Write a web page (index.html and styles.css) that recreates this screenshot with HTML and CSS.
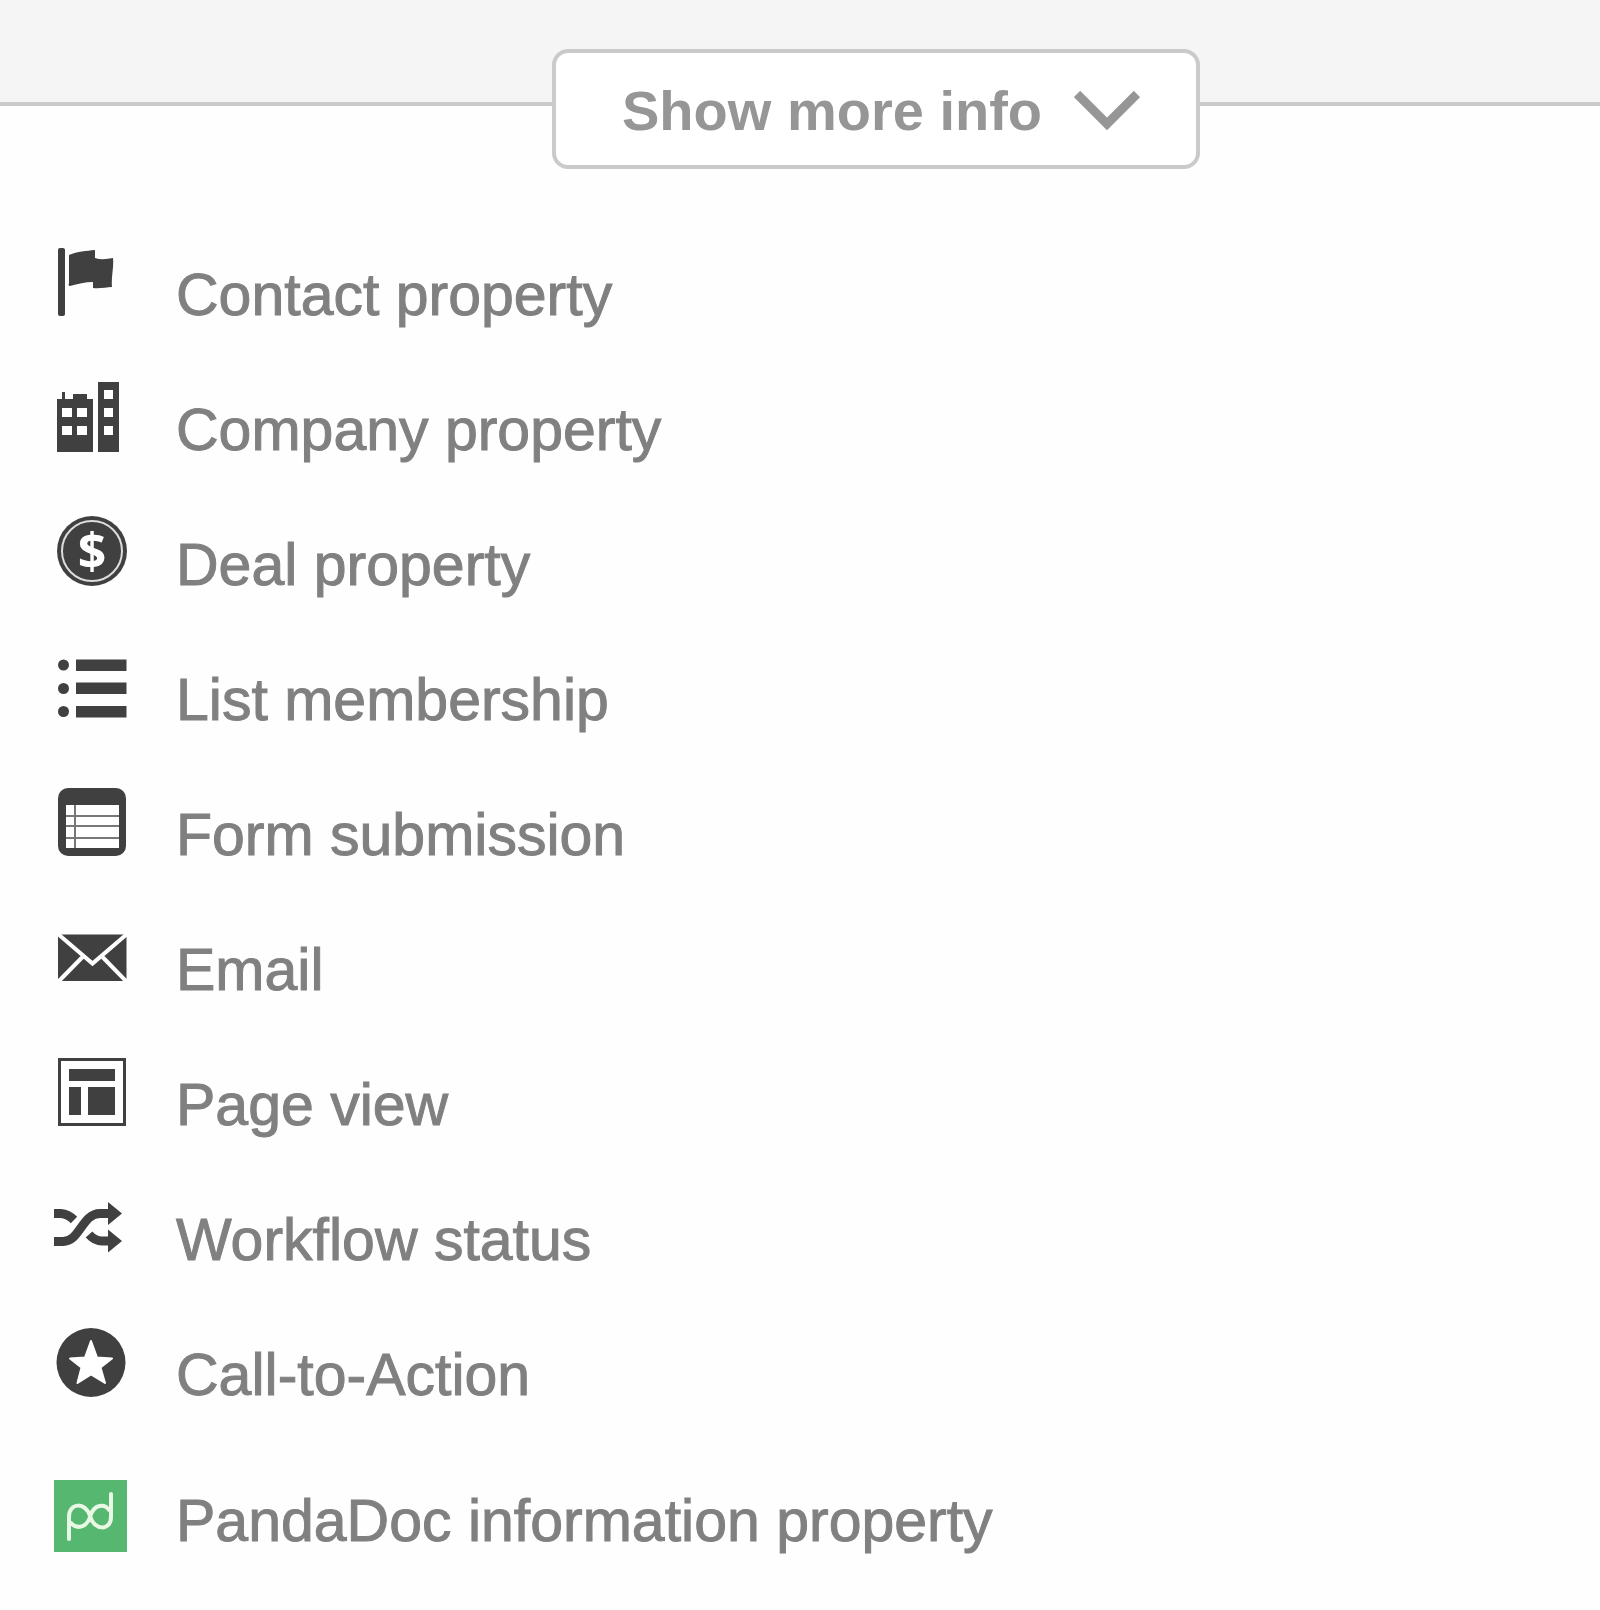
FILE: index.html
```html
<!DOCTYPE html>
<html lang="en">
<head>
  <meta charset="UTF-8">
  <title>Properties</title>
  <link rel="stylesheet" href="styles.css">
</head>
<body>
<header class="info-bar">
  <button class="show-more" type="button">
    Show more info
    <svg class="chevron" viewBox="0 0 66 40" aria-hidden="true">
      <path d="M3 3L33 33L63 3"/>
    </svg>
  </button>
</header>
<main>
  <ul class="properties">
    <li>
      <svg class="icon" viewBox="0 0 74 84" aria-hidden="true">
        <rect x="4" y="3" width="7" height="68" rx="2"/>
        <path d="M15 10C24 6 32 6 41 5V13C47 15 53 14 59 13C60 23 57 32 58 42C52 42 46 44 39 43V37C31 37 24 39 16 41Q14 41 15 38Z"/>
      </svg>
      <span>Contact property</span>
    </li>
    <li>
      <svg class="icon" viewBox="0 0 74 84" aria-hidden="true">
        <path d="M3 72V19H8V12H11V19H19V14H33V19H39V72ZM44 2H65V72H44Z"/>
        <path class="light" d="M8 28h10v9H8zM23 28h10v9H23zM8 46h10v9H8zM23 46h10v9H23zM50 10h9v9h-9zM50 28h9v9h-9zM50 46h9v9h-9z"/>
      </svg>
      <span>Company property</span>
    </li>
    <li>
      <svg class="icon" viewBox="0 0 74 84" aria-hidden="true">
        <circle cx="38" cy="36" r="35"/>
        <circle class="ring" cx="38" cy="36" r="30"/>
        <text class="dollar" x="38" y="54">$</text>
      </svg>
      <span>Deal property</span>
    </li>
    <li>
      <svg class="icon" viewBox="0 0 74 84" aria-hidden="true">
        <circle cx="9.5" cy="15" r="5.5"/>
        <circle cx="9.5" cy="38.5" r="5.5"/>
        <circle cx="9.5" cy="61.5" r="5.5"/>
        <path d="M22 9.5h50.5v11.5H22zM22 32.5h50.5v11.5H22zM22 56h50.5v11.5H22z"/>
      </svg>
      <span>List membership</span>
    </li>
    <li>
      <svg class="icon" viewBox="0 0 74 84" aria-hidden="true">
        <rect x="4" y="3" width="68" height="68" rx="10"/>
        <path class="light" d="M12 20H65V63H12Z"/>
        <path class="rules" d="M12 31H65M12 41H65M12 53H65M21 20V63"/>
      </svg>
      <span>Form submission</span>
    </li>
    <li>
      <svg class="icon" viewBox="0 0 74 84" aria-hidden="true">
        <rect x="4" y="14.5" width="68.5" height="46.5"/>
        <path class="fold" d="M4 14L38.5 43.5L73 14M4 62L29 36.5M73 62L48 36.5"/>
      </svg>
      <span>Email</span>
    </li>
    <li>
      <svg class="icon" viewBox="0 0 74 84" aria-hidden="true">
        <rect class="frame" x="5.5" y="4.5" width="65" height="65"/>
        <path d="M15 14H61V26H15ZM15 32H27V60H15ZM34 32H61V60H34Z"/>
      </svg>
      <span>Page view</span>
    </li>
    <li>
      <svg class="icon" viewBox="0 0 74 84" aria-hidden="true">
        <path class="strand" d="M0 23.5H7Q14 24 20 30M0 51.5H9C26 51.5 28 23.5 46 23.5H56M35 44.5Q41 51 48 51H56"/>
        <path d="M54 12L68 23.5L54 35ZM54 39.5L68 51L54 62.5Z"/>
      </svg>
      <span>Workflow status</span>
    </li>
    <li>
      <svg class="icon" viewBox="0 0 74 84" aria-hidden="true">
        <circle cx="37" cy="37.5" r="34.5"/>
        <path class="star" d="M37 16L43 32.5L58 33.5L46.5 42.5L51 58L37 49.5L23.5 58L27.5 42.5L16 33.5L31 32.5Z"/>
      </svg>
      <span>Call-to-Action</span>
    </li>
    <li class="integration">
      <svg class="icon" viewBox="0 0 74 84" aria-hidden="true">
        <rect class="brand" x="0" y="9" width="73" height="72"/>
        <path class="brand-mark" d="M15 68V46C15 31 32 31 36 45C40 60 57 60 57 46V23M17 52C23 59 33 56 36 46C40 32 51 33 55 39"/>
      </svg>
      <span>PandaDoc information property</span>
    </li>
  </ul>
</main>
</body>
</html>
```
FILE: styles.css
```css
* {
  box-sizing: border-box;
}

body {
  margin: 0;
  background-color: #fefefe;
  color: #808080;
  font-family: "Liberation Sans", Arial, sans-serif;
  font-size: 59px;
}

.info-bar {
  display: flex;
  justify-content: center;
  align-items: flex-start;
  height: 106px;
  padding: 49px 0 0 152px;
  border-bottom: 4px solid #cacaca;
  background-color: #f5f5f5;
}

/* hangs over the bottom edge of the bar */
.show-more {
  display: flex;
  flex-shrink: 0;
  align-items: center;
  gap: 32px;
  height: 120px;
  padding: 3px 56px 0 66px;
  border: 4px solid #cacaca;
  border-radius: 16px;
  background-color: #fff;
  color: #969696;
  font-family: inherit;
  font-size: 56px;
  font-weight: bold;
  white-space: nowrap;
  cursor: pointer;
}

.chevron {
  width: 66px;
  height: 40px;
  fill: none;
  stroke: #969696;
  stroke-width: 9;
}

.properties {
  display: flex;
  flex-direction: column;
  gap: 51px;
  margin: 0;
  padding: 139px 54px 48px;
  list-style: none;
}

.properties li {
  display: flex;
  align-items: flex-start;
  gap: 48px;
}

.properties span {
  padding-top: 8px;
  line-height: 84px;
  margin-bottom: -8px;
  -webkit-text-stroke: 1px #808080;
}

.properties .integration {
  margin-top: 11px;
}

.icon {
  flex-shrink: 0;
  width: 74px;
  height: 84px;
  fill: #404040;
}

.icon .light {
  fill: #fff;
}

.icon .ring {
  fill: none;
  stroke: #ddd;
  stroke-width: 2;
}

.icon .dollar {
  fill: #fff;
  font-family: "Open Sans", sans-serif;
  font-size: 50px;
  font-weight: bold;
  text-anchor: middle;
}

.icon .rules {
  fill: none;
  stroke: #777;
  stroke-width: 2;
}

.icon .fold {
  fill: none;
  stroke: #fff;
  stroke-width: 4;
}

.icon .frame {
  fill: none;
  stroke: #404040;
  stroke-width: 3;
}

.icon .strand {
  fill: none;
  stroke: #404040;
  stroke-width: 9;
}

.icon .star {
  fill: #fff;
  stroke: #fff;
  stroke-width: 2;
  stroke-linejoin: round;
}

.icon .brand {
  fill: #56b870;
}

.icon .brand-mark {
  fill: none;
  stroke: #e9f8e4;
  stroke-width: 4;
  stroke-linecap: round;
}
```
